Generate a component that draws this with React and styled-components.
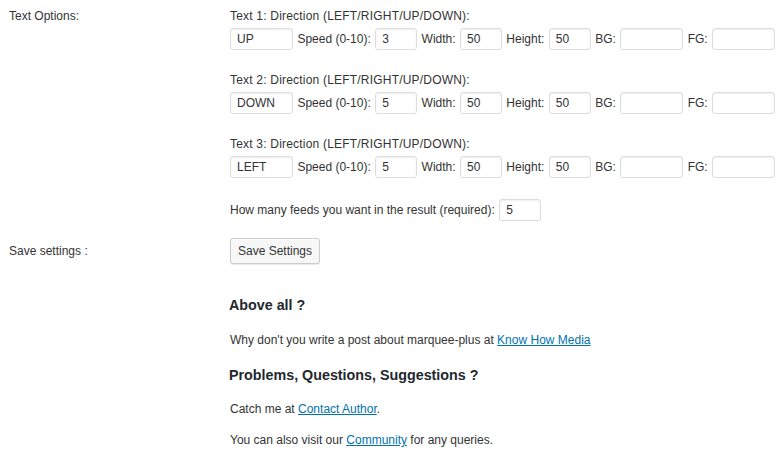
import React from 'react'
import styled, { createGlobalStyle } from 'styled-components'

const Global = createGlobalStyle`
  body {
    margin: 0;
    background: #fff;
    color: #333;
    font-family: 'Liberation Sans', Arial, sans-serif;
    font-size: 12px;
  }
`

const Page = styled.div`
  padding-left: 9px;
`

const Row = styled.div`
  display: grid;
  grid-template-columns: 221px 1fr;
  padding-top: ${({ top }) => top || 0}px;
`

const Label = styled.div`
  line-height: 18px;
  padding-top: ${({ top }) => top || 0}px;
`

const Cell = styled.div`
  display: flex;
  flex-direction: column;
`

const Block = styled.div`
  margin-bottom: 21px;
`

const Caption = styled.div`
  line-height: 18px;
  margin-bottom: 3px;
  letter-spacing: 0.2px;
`

const Fields = styled.div`
  display: flex;
  align-items: center;
  gap: 4.4px;
  white-space: nowrap;
`

const Input = styled.input`
  box-sizing: border-box;
  width: ${({ wide }) => (wide ? 63 : 42)}px;
  height: 22px;
  margin: 0;
  padding: 2px 6px;
  border: 1px solid #ddd;
  border-radius: 3px;
  box-shadow: inset 0 1px 2px rgba(0, 0, 0, 0.07);
  font-family: inherit;
  font-size: 12px;
  color: #333;
  outline: none;
`

const Button = styled.button`
  box-sizing: border-box;
  height: 26px;
  padding: 0 7px;
  white-space: nowrap;
  border: 1px solid #ccc;
  border-radius: 3px;
  background: #f7f7f7;
  box-shadow: inset 0 1px 0 #fff, 0 1px 0 rgba(0, 0, 0, 0.08);
  font-family: inherit;
  font-size: 12px;
  color: #333;
`

const Info = styled.div`
  margin-left: 220px;
  padding-top: 31px;
`

const Heading = styled.h3`
  margin: 0 0 ${({ after }) => after}px;
  font-size: 14.3px;
  line-height: 20px;
  font-weight: bold;
  color: #23282d;
`

const Para = styled.p`
  margin: 0 0 ${({ after }) => after}px;
  line-height: 20px;
  padding-left: 1px;
`

const A = styled.a`
  color: #0073aa;
  text-decoration: underline;
`

const texts = [
  { dir: 'UP', speed: '3' },
  { dir: 'DOWN', speed: '5' },
  { dir: 'LEFT', speed: '5' },
]

const App = () => {
  return (
    <Page>
      <Global />
      <Row top={7}>
        <Label>Text Options:</Label>
        <Cell>
          {texts.map((t, i) => (
            <Block key={i}>
              <Caption>Text {i + 1}: Direction (LEFT/RIGHT/UP/DOWN):</Caption>
              <Fields>
                <Input wide defaultValue={t.dir} />
                <span>Speed (0-10):</span>
                <Input defaultValue={t.speed} />
                <span>Width:</span>
                <Input defaultValue='50' />
                <span>Height:</span>
                <Input defaultValue='50' />
                <span>BG:</span>
                <Input wide />
                <span>FG:</span>
                <Input wide />
              </Fields>
            </Block>
          ))}
          <Fields>
            <span>How many feeds you want in the result (required):</span>
            <Input defaultValue='5' />
          </Fields>
        </Cell>
      </Row>
      <Row top={17}>
        <Label top={4}>Save settings :</Label>
        <div>
          <Button>Save Settings</Button>
        </div>
      </Row>
      <Info>
        <Heading after={15}>Above all ?</Heading>
        <Para after={15}>
          Why don't you write a post about marquee-plus at <A href='#'>Know How Media</A>
        </Para>
        <Heading after={14}>Problems, Questions, Suggestions ?</Heading>
        <Para after={11}>
          Catch me at <A href='#'>Contact Author</A>.
        </Para>
        <Para after={0}>
          You can also visit our <A href='#'>Community</A> for any queries.
        </Para>
      </Info>
    </Page>
  )
}

export default App
